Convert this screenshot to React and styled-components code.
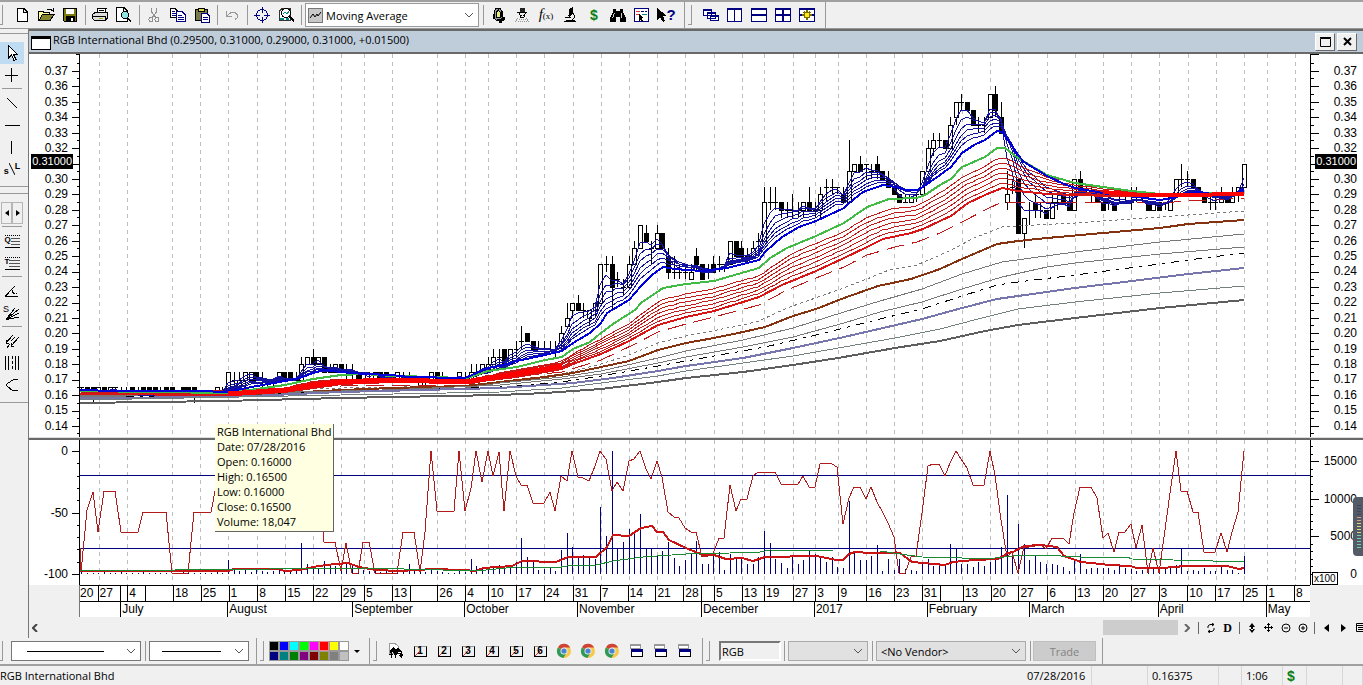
import React from 'react'
import styled, { createGlobalStyle } from 'styled-components'

const uiFont = '"Open Sans", "Noto Sans", sans-serif'
const axisFont = '"Liberation Sans", Arial, sans-serif'

/* ---------- data ---------- */

// open high low close, in half cents, one entry per trading day
const candles = `33 33 32 33,33 33 32 32,33 33 31 32,32 33 32 33,33 33 32 32,32 33 32 33,33 33 32 33,32 33 32 32,32 33 32 32,33 33 32 32,
32 33 32 32,33 33 32 32,33 33 32 32,33 33 32 32,32 33 32 32,33 33 32 32,33 33 32 32,32 32 32 32,33 33 32 32,33 33 32 32,33 33 31 32,
32 32 32 32,32 32 32 32,32 32 32 32,32 33 32 33,32 33 32 32,32 35 32 35,34 35 33 34,33 35 33 34,34 35 33 35,34 35 34 35,35 35 34 34,
34 35 33 34,34 34 33 34,34 34 33 34,34 35 34 35,35 35 34 34,35 35 34 34,34 35 34 34,34 37 34 36,36 37 36 37,37 38 36 36,36 37 36 37,
37 37 35 35,35 36 35 35,35 36 35 36,36 36 35 35,35 36 34 35,35 36 34 35,35 35 34 34,34 35 34 35,34 35 34 34,34 35 34 35,35 35 34 34,
35 35 34 34,34 34 34 34,34 35 34 35,34 35 34 34,34 35 34 34,34 34 34 34,33 34 33 34,34 34 33 34,34 35 34 35,35 35 34 34,34 35 34 34,
34 34 34 34,34 34 34 34,34 35 34 35,34 35 34 34,34 36 34 35,35 36 34 35,35 36 35 36,35 37 35 36,36 38 36 37,37 38 36 37,38 38 36 36,
36 38 36 38,38 39 37 38,39 41 38 39,40 40 39 39,39 39 38 38,38 39 38 38,38 39 38 38,38 39 38 38,38 39 37 38,39 41 38 40,41 44 41 42,
43 44 42 44,44 45 43 43,43 44 42 43,42 43 41 43,43 44 42 44,44 49 44 49,49 50 48 49,49 50 43 46,47 48 46 47,46 47 45 46,46 50 46 49,
49 52 49 51,51 54 51 54,53 54 52 52,51 52 49 51,51 54 51 53,53 53 51 51,50 51 47 48,48 50 47 48,48 49 47 48,48 49 47 48,47 49 47 48,
50 51 48 49,49 49 47 47,48 49 47 48,49 50 48 48,49 50 48 49,49 49 48 49,49 52 49 52,52 52 50 50,51 52 50 50,50 51 49 50,50 52 50 51,
52 53 50 52,52 59 52 57,57 59 56 57,57 59 56 57,57 57 55 56,56 57 55 56,56 58 55 56,56 57 55 56,56 57 55 57,57 59 56 56,56 57 55 56,
56 59 55 58,59 60 57 59,59 60 58 59,59 59 58 59,58 59 57 57,57 65 57 61,61 62 61 62,62 63 61 61,62 62 60 62,61 62 60 61,62 63 60 61,
61 61 60 60,60 61 59 59,59 59 58 58,58 58 57 57,57 58 57 57,57 58 57 58,58 58 57 58,58 61 58 61,61 65 61 64,64 66 63 65,65 66 64 65,
65 65 64 64,64 68 64 67,68 70 67 70,70 71 69 70,70 70 69 69,69 69 67 67,67 68 66 67,67 68 66 67,68 71 68 71,71 72 68 69,68 70 66 66,
57 61 56 58,59 60 58 59,60 60 53 53,53 55 51 55,56 57 54 56,57 58 55 56,56 57 55 56,56 56 55 55,55 58 55 57,57 58 56 57,58 58 57 57,
57 58 56 56,56 60 56 60,60 61 59 59,58 59 58 58,58 59 57 58,58 58 57 57,57 57 56 56,57 58 56 57,57 57 56 56,57 58 57 57,57 58 57 57,
57 59 56 57,58 59 57 58,57 58 57 57,57 57 56 56,56 57 56 57,57 57 56 56,57 57 56 57,56 58 56 58,58 60 58 60,60 62 59 60,60 61 59 60,
60 60 59 59,59 59 58 58,58 58 57 57,57 58 56 57,57 58 56 57,57 59 57 58,58 58 57 57,57 59 57 58,58 59 57 59,59 62 59 62`
  .split(',').map((day) => day.trim().split(' ').map(Number))

const willR = [121, 59, 41, 81, 40, 40, 40, 81, 81, 81, 81, 61, 61, 61, 61, 61, 122, 122, 122, 122, 61, 61, 61, 61, 30, 0, 0, 20, 20, 20, 20, 40, 40, 40, 40, 0, 40, 40, 40, 0, 0, 30, 30, 91, 91, 91, 120, 92, 122, 122, 91, 91, 122, 122, 122, 122, 122, 81, 81, 81, 121, 81, 0, 60, 60, 60, 60, 0, 60, 37, 0, 31, 0, 25, 1, 60, 0, 25, 34, 34, 52, 52, 52, 41, 60, 25, 30, 0, 26, 27, 30, 15, 0, 8, 40, 31, 40, 10, 8, 0, 18, 28, 10, 26, 61, 66, 67, 77, 81, 81, 106, 105, 103, 87, 87, 34, 60, 48, 48, 25, 21, 21, 21, 21, 33, 33, 33, 33, 25, 36, 36, 13, 12, 13, 16, 73, 47, 36, 36, 48, 36, 51, 60, 72, 86, 122, 122, 106, 105, 62, 15, 13, 13, 25, 12, 0, 8, 17, 34, 34, 34, 0, 24, 69, 106, 101, 122, 96, 96, 95, 93, 98, 87, 87, 87, 93, 62, 36, 36, 36, 47, 87, 82, 101, 81, 81, 73, 97, 74, 122, 97, 122, 79, 42, 0, 40, 40, 61, 61, 101, 101, 101, 82, 101, 81, 61, 0]

const volume = [2, 1, 1, 1, 2, 1, 1, 2, 1, 1, 1, 2, 1, 1, 1, 1, 1, 1, 3, 1, 1, 1, 1, 1, 2, 1, 14, 4, 3, 4, 2, 5, 3, 2, 3, 5, 4, 2, 3, 31, 10, 5, 6, 13, 8, 8, 6, 12, 8, 5, 4, 3, 5, 2, 3, 2, 4, 4, 10, 3, 2, 2, 5, 3, 2, 1, 1, 3, 2, 15, 8, 6, 7, 8, 9, 8, 9, 12, 36, 17, 12, 4, 5, 6, 3, 24, 41, 27, 17, 19, 18, 15, 67, 38, 123, 25, 32, 45, 43, 60, 25, 25, 18, 23, 32, 16, 8, 14, 20, 33, 10, 10, 20, 22, 4, 20, 15, 16, 10, 10, 17, 43, 31, 15, 11, 6, 18, 10, 14, 24, 20, 18, 12, 17, 7, 6, 73, 22, 14, 14, 18, 29, 3, 15, 4, 15, 5, 4, 3, 10, 15, 8, 10, 8, 30, 26, 10, 10, 7, 12, 8, 12, 14, 27, 79, 22, 50, 30, 14, 18, 12, 10, 10, 9, 7, 3, 13, 20, 5, 6, 6, 6, 6, 4, 10, 6, 5, 3, 4, 3, 5, 3, 5, 8, 9, 25, 3, 4, 3, 6, 3, 3, 7, 4, 4, 1, 18]

const barX = (i) => Math.round(81.3 + i * 5.642)
const priceY = (u) => Math.round(71 + (74 - u) * 7.717)

const toPoints = (str) => str.trim().split(/\s+/).map((p) => p.split(',').map(Number))
const draw = (pts) => pts.map((p) => p.join(',')).join(' ')

const blue = '80,390 116,391 200,391 226,392 257,386 285,381 300,378 313,373 324,370 341,372 364,374 392,375 409,377 465,378 488,368 500,366 517,361 545,355 562,351 573,343 590,333 601,323 607,313 629,300 641,286 652,275 663,267 675,269 686,270 703,271 727,268 743,264 759,260 765,252 782,237 799,227 816,221 844,208 849,203 863,192 883,185 895,187 906,190 917,190 923,187 940,175 951,167 962,153 974,145 985,140 997,131 1002,132 1010,143 1018,155 1024,162 1047,176 1064,184 1075,188 1092,191 1113,195 1137,197 1160,200 1172,198 1188,193 1200,192 1217,195 1233,195 1244,189'
const green = '80,391 228,393 257,389 285,385 313,379 341,375 364,374 392,376 442,377 465,379 488,371 517,367 545,360 562,357 573,349 590,342 601,333 613,324 635,310 641,303 663,288 686,284 714,281 731,276 759,268 770,258 787,248 816,236 844,223 867,207 889,199 917,198 925,195 940,185 951,179 962,167 985,157 997,148 1005,148 1018,158 1047,175 1075,183 1103,187 1132,191 1159,194 1244,193'
const redTop = toPoints('80,392 228,393 285,388 313,381 341,379 392,378 465,380 516,370 545,365 562,361 573,354 601,339 629,324 647,310 663,299 686,294 714,289 743,280 759,276 782,260 793,253 844,232 867,217 895,208 917,206 945,190 962,177 985,167 997,158 1008,159 1024,168 1047,177 1075,183 1132,192 1159,194 1244,193')
const redLow = toPoints('80,394 228,395 285,392 313,388 341,384 392,382 465,383 516,377 545,372 562,369 573,364 601,354 629,341 658,325 686,317 714,311 743,302 759,297 782,285 816,271 844,258 867,247 883,239 911,233 923,229 940,221 951,216 968,203 985,195 1002,188 1018,191 1047,194 1110,196 1244,195')

const longLines = [
  { color: '#c01818', dash: '18 8', pts: '80,395 341,386 465,385 500,378 562,372 601,360 635,344 658,332 686,324 714,317 759,305 787,290 816,278 844,267 867,255 895,247 917,242 940,233 962,222 985,210 1002,202 1047,203 1132,202 1160,203 1188,201 1244,198' },
  { color: '#777', dash: '3 3', pts: '80,395 341,388 465,386 562,374 601,364 629,355 658,343 686,336 743,325 759,321 787,308 838,290 867,279 889,270 917,265 940,255 951,250 974,238 1002,227 1018,226 1075,223 1160,217 1244,211' },
  { color: '#853210', width: 2, pts: '80,395 228,396 341,390 392,388 465,386 500,382 545,377 573,373 601,367 629,361 658,350 686,343 714,338 743,332 765,327 793,316 816,309 844,298 878,286 911,279 940,269 962,259 997,244 1018,241 1047,238 1103,233 1160,228 1188,224 1244,220' },
  { color: '#777', pts: '80,396 341,391 465,388 500,383 562,377 601,371 658,358 686,351 743,340 793,328 844,312 880,301 922,289 962,274 1002,262 1075,252 1160,242 1244,234' },
  { color: '#777', pts: '80,397 341,392 500,385 562,379 601,374 658,363 686,357 743,347 793,337 844,323 880,312 922,302 962,289 1002,277 1047,267 1075,263 1160,254 1244,247' },
  { color: '#000', dash: '8 6 3 6', pts: '80,398 341,392 500,387 562,382 601,376 658,366 714,356 765,347 816,335 844,328 880,319 922,309 962,296 997,285 1018,282 1075,275 1160,264 1188,260 1244,253' },
  { color: '#7676ac', width: 2, pts: '80,398 228,397 341,392 500,388 573,383 613,378 658,371 686,366 743,358 793,348 844,337 883,328 922,319 962,308 997,299 1018,296 1075,288 1132,281 1188,274 1244,268' },
  { color: '#72807f', pts: '80,400 341,395 500,392 562,388 601,383 658,376 686,371 743,363 793,356 844,347 895,338 940,329 978,319 1018,309 1075,302 1160,293 1244,286' },
  { color: '#5e5e5e', width: 2, pts: '80,403 223,401 341,398 500,395 545,393 601,389 658,382 686,378 743,372 793,365 838,358 895,348 940,341 985,331 1018,325 1075,318 1160,308 1244,300' },
]

const volRed = '80,571 228,571 234,569 279,569 284,571 300,570 313,567 326,565 348,563 359,567 376,570 400,571 433,569 463,570 476,571 483,568 512,566 522,561 556,562 568,557 596,557 607,547 613,535 629,536 641,528 652,526 657,532 663,532 669,540 686,548 703,555 714,555 726,559 742,558 753,561 765,557 816,556 837,560 843,560 849,554 855,552 870,553 900,553 912,562 923,563 945,565 953,562 974,560 998,559 1008,553 1013,552 1024,546 1041,545 1057,547 1064,556 1081,562 1110,565 1130,566 1137,568 1159,568 1177,567 1182,566 1227,566 1239,569 1244,568'
const volGreen = '80,571 364,568 443,570 476,571 516,567 556,568 567,566 596,565 613,561 643,557 686,554 730,553 760,552 770,550 833,551 880,551 900,554 922,557 962,558 995,558 1013,556 1041,555 1080,557 1127,557 1132,559 1173,560 1213,561 1239,562 1244,561'

// day row and month row of the date axis: [label, width share]
const dayCells = [['20', 19], ['27', 22], ['', 6], ['4', 17], ['', 28], ['18', 28], ['25', 28], ['1', 29], ['8', 28], ['15', 28], ['22', 28], ['29', 23], ['5', 28], ['13', 17], ['', 28], ['26', 28], ['4', 23], ['10', 28], ['17', 28], ['24', 29], ['31', 27], ['7', 28], ['14', 28], ['21', 28], ['28', 17], ['', 12], ['5', 28], ['13', 22], ['19', 29], ['27', 22], ['3', 23], ['9', 28], ['16', 28], ['23', 28], ['31', 17], ['', 23], ['13', 28], ['20', 28], ['27', 29], ['6', 28], ['13', 28], ['20', 28], ['27', 28], ['3', 29], ['10', 28], ['17', 28], ['25', 23], ['1', 28], ['8', 15]]
const monthCells = [['', 41], ['July', 107], ['August', 125], ['September', 112], ['October', 113], ['November', 124], ['December', 113], ['2017', 113], ['February', 102], ['March', 129], ['April', 108], ['May', 43]]

const gridX = [99, 127, 172, 200, 228, 257, 285, 313, 341, 364, 392, 437, 465, 488, 516, 544, 573, 601, 629, 657, 685, 714, 742, 764, 793, 815, 838, 866, 894, 922, 962, 990, 1018, 1047, 1075, 1103, 1131, 1159, 1188, 1216, 1244, 1267, 1295]
const prices = Array.from({ length: 24 }, (_, i) => (0.37 - i * 0.01).toFixed(2))

const ema = (n) => {
  let v = 32.6
  return candles.map((c, i) => {
    v += (c[3] - v) * (2 / (n + 1))
    return [barX(i), Math.round(71 + (74 - v) * 7.717)]
  })
}

const yAt = (pts, x) => {
  const i = Math.max(1, pts.findIndex((p) => p[0] >= x))
  const [a, b] = [pts[i - 1], pts[i]]
  return a[1] + ((b[1] - a[1]) * (x - a[0])) / (b[0] - a[0])
}

const redFan = [0, 1, 2, 3, 4, 5].map((k) =>
  candles.map((_, i) => {
    const x = barX(i)
    const t = k / 6
    return [x, Math.round(yAt(redTop, x) * (1 - t) + yAt(redLow, x) * t)]
  })
)

/* ---------- charts ---------- */

const Line = ({ pts, color, width = 1, dash }) => (
  <polyline points={pts} fill="none" stroke={color} strokeWidth={width} strokeDasharray={dash} />
)

const Grid = ({ from, to }) => gridX.map((x) => (
  <path key={x} d={`M${x + 0.5} ${from}V${to}`} stroke="#bdbdbd" strokeDasharray="4 4" />
))

const PriceChart = () => (
  <Plot viewBox="70 54 1250 383" preserveAspectRatio="none" shapeRendering="crispEdges">
    <Grid from={54} to={437} />
    {candles.map(([o, h, l, c], i) => {
      const x = barX(i)
      const top = priceY(Math.max(o, c))
      const height = Math.abs(priceY(o) - priceY(c))
      return (
        <g key={i} stroke="#000">
          <path d={`M${x + 0.5} ${priceY(h)}V${priceY(l)}`} />
          {o === c
            ? <path d={`M${x - 2} ${top + 0.5}H${x + 3}`} />
            : <rect x={x - 1.5} y={top + 0.5} width="4" height={height} fill={c > o ? '#fff' : '#000'} />}
        </g>
      )
    })}
    {longLines.map((l) => <Line key={l.pts} {...l} />)}
    {[3, 5, 7, 9, 11, 13].map((n) => <Line key={n} pts={draw(ema(n))} color="#1414a0" />)}
    {redFan.map((pts, i) => <Line key={i} pts={draw(pts)} color="#c41a1a" />)}
    <Line pts={green} color="#40bc44" width={2} />
    <Line pts={blue} color="#0000d8" width={2} />
    <Line pts={draw(redLow)} color="#d81414" width={2} />
    <Line pts="228,394 285,390 313,385 341,382 392,380 465,382 516,374 545,369 562,366" color="#f00" width={5} />
    <Line pts="1103,192 1140,195 1180,195 1244,194" color="#f00" width={4} />
    <path d="M79.5 54V437M1310.5 54V437M76 54.5H80M1310 54.5H1319" stroke="#000" />
    {prices.map((p, i) => {
      const y = Math.round(71 + i * 15.435) + 0.5
      return <path key={p} d={`M72 ${y}H80M1310 ${y}H1319M77 ${y - 8}H80M1310 ${y - 8}H1314`} stroke="#000" />
    })}
    <path d="M77 433.5H80M1310 433.5H1314" stroke="#000" />
  </Plot>
)

const IndicatorChart = () => (
  <Plot viewBox="70 440 1250 145" preserveAspectRatio="none" shapeRendering="crispEdges">
    <Grid from={440} to={585} />
    {volume.map((v, i) => <path key={i} d={`M${barX(i) + 0.5} 574V${574 - v}`} stroke="#000080" />)}
    <path d="M80 475.5H1310M80 548.5H1310" stroke="#000080" />
    <Line pts={`80,548 ${draw(willR.map((v, i) => [barX(i), 451 + v]))}`} color="#b01c1c" />
    <Line pts={volRed} color="#c81414" width={2} />
    <Line pts={volGreen} color="#1c8a34" />
    <path d="M79.5 440V585M1310.5 440V585" stroke="#000" />
    {Array.from({ length: 11 }, (_, i) => {
      const y = Math.round(451 + i * 12.3) + 0.5
      return <path key={i} d={`M${i % 5 ? 77 : 72} ${y}H80`} stroke="#000" />
    })}
    {Array.from({ length: 18 }, (_, i) => {
      const y = Math.round(574 - i * 7.53) + 0.5
      return <path key={i} d={`M1310 ${y}H${i % 5 ? 1313 : 1319}`} stroke="#000" />
    })}
  </Plot>
)

/* ---------- icons ---------- */

const Icon = ({ children, size = 18 }) => (
  <svg width={size} height={size} viewBox="0 0 18 18" fill="none" stroke="#000" shapeRendering="crispEdges" aria-hidden="true">
    {children}
  </svg>
)

const icons = {
  new: <path d="M4.500 2.500H11L14.500 6V15.500H4.500ZM10.500 3V6.500H14" fill="#fff" />,
  open: <><path d="M1.500 14.500V5.500H6L7 6.500H12.500V8.500" fill="#ffff9c" /><path d="M2 14.500L5.500 8.500H17L13 14.500Z" fill="#84842c" /><path d="M10 3.500H14L16.500 5.500M16.500 2V6" /></>,
  save: <><path d="M2.500 2.500H15.500V15.500H3.500L2.500 14.500Z" fill="#7b7b10" /><path d="M5 3H13V8H5Z" fill="#fff" stroke="none" /><path d="M5 10H14V16H5Z" fill="#000" stroke="none" /><path d="M11 12V15" stroke="#fff" strokeWidth="2" /></>,
  print: <><path d="M5.500 7.500L7 2.500H15L13.500 7.500" fill="#fff" /><path d="M1.500 8.500L4 6.500H16.500V12L14.500 14.500H3.500L1.500 12.500Z" fill="#ddd" /><path d="M8 4.500H13M7 6.500H12M2 10.500H14V14" /><path d="M8 12.500H12" stroke="#a8a800" /></>,
  preview: <><path d="M1.500 1.500H9L12.500 5V15.500H1.500ZM8.500 2V5.500H12" fill="#fff" /><circle cx="10" cy="9" r="3.500" fill="#8fe3e0" /><path d="M12.500 12L16 15.500" strokeWidth="2" /></>,
  cut: <g stroke="#909090"><path d="M6.500 2V6L11 12M11.500 2V6L7 12" /><circle cx="6" cy="13.500" r="2" /><circle cx="12" cy="13.500" r="2" /></g>,
  copy: <g stroke="#000080"><path d="M1.500 2.500H6L8.500 5V11.500H1.500Z" fill="#fff" stroke="#000" /><path d="M3 5.500H6M3 7.500H7M3 9.500H7" /><path d="M7.500 5.500H13L16.500 9V15.500H7.500Z" fill="#fff" /><path d="M9 9.500H13M9 11.500H15M9 13.500H15" /></g>,
  paste: <><path d="M2.500 3.500H14.500V14.500H2.500Z" fill="#7b7b4a" /><path d="M5.500 2.500H11.500V5.500H5.500Z" fill="#d8d84a" /><path d="M8.500 7.500H14L16.500 10V16.500H8.500Z" fill="#fff" stroke="#000080" /><path d="M10 11.500H15M10 13.500H15" stroke="#000080" /></>,
  undo: <path d="M3.500 5V10.500H9M4 10L8 6.500H12L14.500 9V11.500L12 13.500" stroke="#999" />,
  target: <g stroke="#000080"><circle cx="9" cy="9" r="5.500" /><path d="M9.500 1V7M9.500 11V17M1 9.500H7M11 9.500H17" /></g>,
  magnify: <><path d="M2.500 14V5L5 2.500H13V14Z" fill="#fff" stroke="#333" /><path d="M3 12.500H7M9 12.500H12" stroke="#088" strokeWidth="2" /><circle cx="9" cy="7" r="4.500" fill="#fff" strokeWidth="1" /><path d="M6 8L8 6L10 8L12 5" stroke="#079080" /><path d="M12 10L17 15.500" strokeWidth="2" /></>,
  expert: <><path d="M5.500 5L7 2.500H11L13 5V12L11 14H7L4.500 12Z" fill="#999" /><path d="M7.500 6V11H11.500V7L9.500 4Z" fill="#e7ed7c" /><path d="M5 6V12M12 5V11" /><path d="M8 13.500H15M10 15.500H13M13 11L16 13" strokeWidth="2" /></>,
  explorer: <><path d="M4 6.500H14" /><path d="M7 2H12V6H7Z" fill="#222" stroke="none" /><path d="M6.500 7L7.500 11H11L12.500 7" fill="#eee" /><path d="M8 9.500H9M10 9.500H11" /><path d="M2 16L5 12M16 16L13 12M5 15.500H14M6 13.500H13" stroke="#999" strokeDasharray="1 1" /></>,
  microscope: <><path d="M9 3L11 2V8L8 11Z" fill="#000" /><path d="M7 9L10 12M12 7L14 11L11 14M4 11.500H10M3 15.500H15M5 14.500H14" /></>,
  binoculars: <><path d="M4 3H7V5H11V3H14V6L17 12V16H11V11H7V16H1V12L4 6Z" fill="#000" stroke="none" /><path d="M5.500 7L3.500 12M12.500 7V12" stroke="#ccc" /></>,
  report: <><rect x="1.500" y="2.500" width="14" height="13" fill="#fff" stroke="#000080" /><path d="M3 5.500H7M3 8.500H6" stroke="#d33" /><path d="M8 5.500H14" stroke="#000080" strokeDasharray="3 1" /><path d="M9 8.500H14" stroke="#0a8a7a" /><path d="M6 8V15L8 13L9 16L10 15L9 12H11Z" fill="#000" stroke="none" /></>,
  pointer: <path d="M1 2V14L4 11L7 16L9 15L7 10H11Z" fill="#000" stroke="none" />,
  cascade: <g stroke="#000080" fill="#fff"><path d="M1.500 3.500H9.500V9.500H1.500ZM5.500 6.500H13.500V12.500H5.500ZM8.500 9.500H16.500V14.500H8.500Z" /><path d="M1 4H10M5 7H14M8 10H17" strokeWidth="2" /></g>,
  cols: <g stroke="#000080"><path d="M1.500 2.500H15.500V15.500H1.500ZM8.500 3V15" fill="#fff" /><path d="M1 3H16" strokeWidth="2" /></g>,
  rows: <g stroke="#000080"><path d="M1.500 2.500H16.500V15.500H1.500Z" fill="#fff" /><path d="M1 3H17M1 9H17" strokeWidth="2" /></g>,
  tiles: <g stroke="#000080"><path d="M1.500 2.500H16.500V15.500H1.500Z" fill="#fff" /><path d="M1 3H17M1 9H17M9 3V15" strokeWidth="2" /></g>,
  gear: <><path d="M1.500 2.500H16.500V15.500H1.500Z" fill="#fff" stroke="#000080" /><path d="M1 3H17M1 9H17" stroke="#000080" strokeWidth="2" /><path d="M9 4V14M4 9H14M6 6L12 12M12 6L6 12" stroke="#7b6c00" strokeWidth="2" /><circle cx="9" cy="9" r="3" fill="#ffe61c" stroke="#7b6c00" /></>,
  arrow: <path d="M5.500 1.500V14L8.500 11L11 16.500L13 15.500L10.500 10.500H14.500Z" fill="#fff" />,
  plus: <path d="M8.500 2V16M2 9.500H15" />,
  diagonal: <path d="M4 4L14 14" />,
  horizontal: <path d="M2 9.500H17" />,
  vertical: <path d="M8.500 3V16" />,
  angle: <path d="M2 14.500L12 4M2 14.500H15M9.500 8V10L11.500 12M13 11.500H14" />,
  fan: <><path d="M3 15.500L12 4M3 15.500L16 5M3 15.500L16 9M3 15.500L16 13" /><text x="0" y="8" fontSize="9" fontFamily="Liberation Sans" fill="#000" stroke="none">S</text></>,
  slashes: <path d="M3 11L10 3M8 14L16 5M4 16L7 12M8 9L12 5M3.500 8V11.500H6M8.500 11V14.500H11" />,
  bars: <><path d="M2.500 2V16M5.500 2V16M12.500 2V16M15.500 2V16" /><path d="M9.500 2V16" strokeDasharray="3 2" /></>,
  curve: <path d="M15 3L10 4L5 7L3 9L5 11L9 14L15 15" />,
  horse: <><path d="M2.500 1.500H8L11 4V11H2.500Z" fill="#fff" stroke="#999" /><path d="M3 8L6 5L9 7L11 6L15 9L16 14L13 15L11 12L8 14L6 10L3 11Z" fill="#000" stroke="none" /><path d="M4.500 10V16M8.500 12V16M14 12V16M2 12.500H6" /><path d="M11 10.500H14M11 12.500H13" stroke="#fff" /></>,
  window: <><path d="M3.500 2.500H13.500V6H3.500Z" fill="#fff" stroke="#999" /><path d="M3 3H14" stroke="#999" strokeWidth="2" /><path d="M4.500 7.500H15.500V14.500H4.500Z" fill="#fff" /><path d="M4 8.500H16" stroke="#000080" strokeWidth="3" /></>,
}

const Chrome = () => (
  <svg width="16" height="16" viewBox="0 0 16 16" aria-hidden="true">
    <circle cx="8" cy="8" r="7" fill="#f7c948" />
    <path d="M8 8L2 4.200A7 7 0 0 1 14.200 4.600H8Z" fill="#cf4236" />
    <path d="M8 8L1.900 4.400A7 7 0 0 0 7.400 15L10.400 10Z" fill="#2f9a58" />
    <circle cx="8" cy="8" r="3.500" fill="#eee" />
    <circle cx="8" cy="8" r="2.600" fill="#4a83d6" />
  </svg>
)

const Chevron = () => (
  <svg width="10" height="6" viewBox="0 0 10 6" fill="none" stroke="#555" aria-hidden="true">
    <path d="M1 1L5 5L9 1" />
  </svg>
)

/* ---------- page ---------- */

const IconButton = ({ name, label, children }) => (
  <ToolButton type="button" aria-label={label || name}>
    {children || <Icon>{icons[name]}</Icon>}
  </ToolButton>
)

const TopToolbar = () => (
  <Toolbar>
    <ToolGroup>
      {['new', 'open', 'save'].map((n) => <IconButton key={n} name={n} />)}
      <Sep />
      {['print', 'preview'].map((n) => <IconButton key={n} name={n} />)}
      <Sep />
      {['cut', 'copy', 'paste'].map((n) => <IconButton key={n} name={n} />)}
      <Sep />
      <IconButton name="undo" />
      <Sep />
      {['target', 'magnify'].map((n) => <IconButton key={n} name={n} />)}
      <Sep />
      <SelectBox $width={174} $height={24} $bg="#fff" $border="#999">
        <ComboIcon><svg width="13" height="13" viewBox="0 0 13 13" fill="none" stroke="#000"><path d="M1 9L4 5L6 8L8 5L9 7L12 3" /></svg></ComboIcon>
        <select aria-label="Indicator" defaultValue="ma"><option value="ma">Moving Average</option></select>
        <Chevron />
      </SelectBox>
      <Sep />
      {['expert', 'explorer'].map((n) => <IconButton key={n} name={n} />)}
      <IconButton label="Indicator builder"><Fx>f<small>(x)</small></Fx></IconButton>
      <IconButton name="microscope" />
      <IconButton label="Trade"><Dollar>$</Dollar></IconButton>
      {['binoculars', 'report'].map((n) => <IconButton key={n} name={n} />)}
      <IconButton label="Help"><Icon>{icons.pointer}</Icon><Question>?</Question></IconButton>
    </ToolGroup>
    <ToolGroup $grip>
      {['cascade', 'cols', 'rows', 'tiles', 'gear'].map((n) => <IconButton key={n} name={n} />)}
    </ToolGroup>
  </Toolbar>
)

const SideTool = ({ name }) => (
  <SideButton type="button" aria-label={name} $active={name === 'arrow'}><Icon>{icons[name]}</Icon></SideButton>
)

const Sidebar = () => (
  <Side>
    <SideGroup>
      {['arrow', 'plus'].map((n) => <SideTool key={n} name={n} />)}
      <SideSep />
      {['diagonal', 'horizontal', 'vertical'].map((n) => <SideTool key={n} name={n} />)}
      <SideButton type="button" aria-label="Speed line">
        <Letters><b>s</b><svg width="6" height="14" viewBox="0 0 6 14" stroke="#000" fill="none"><path d="M0 1L6 13" /></svg><b>L</b></Letters>
      </SideButton>
    </SideGroup>
    <SideGroup>
      <Pager>
        <button type="button" aria-label="Previous tools"><svg width="4" height="6" viewBox="0 0 4 6"><path d="M4 0V6L0 3Z" /></svg></button>
        <button type="button" aria-label="Next tools"><svg width="4" height="6" viewBox="0 0 4 6"><path d="M0 0V6L4 3Z" /></svg></button>
      </Pager>
      <SideSep />
      {['Q', 'T'].map((t) => (
        <SideButton type="button" key={t} aria-label={`${t} lines`}>
          <Quad><span>{t}</span></Quad>
        </SideButton>
      ))}
      <SideSep />
      {['angle', 'fan'].map((n) => <SideTool key={n} name={n} />)}
      <SideSep />
      {['slashes', 'bars', 'curve'].map((n) => <SideTool key={n} name={n} />)}
    </SideGroup>
  </Side>
)

const palette = ['#000', '#00f', '#0ff', '#0f0', '#f0f', '#f00', '#ff0', '#fff', '#000080', '#008080', '#008000', '#800080', '#800000', '#808000', '#808080', '#c0c0c0']

const BottomToolbar = () => (
  <LowerBar>
    <ToolGroup>
      <SelectBox $width={130} $bg="#fff" $border="#777" $line><select aria-label="Line style" /><Chevron /></SelectBox>
      <Sep />
      <SelectBox $width={100} $bg="#fff" $border="#777" $line><select aria-label="Line weight" /><Chevron /></SelectBox>
    </ToolGroup>
    <ToolGroup $grip>
      <Palette>
        {palette.map((c) => <Swatch key={c} type="button" aria-label={c} $color={c} $picked={c === '#f00'} />)}
      </Palette>
      <DropArrow type="button" aria-label="More colours"><svg width="6" height="3" viewBox="0 0 6 3"><path d="M0 0H6L3 3Z" /></svg></DropArrow>
    </ToolGroup>
    <ToolGroup $grip>
      <IconButton name="horse" />
      {[1, 2, 3, 4, 5, 6].map((n) => <IconButton key={n} label={`Template ${n}`}><Template>{n}</Template></IconButton>)}
      {[1, 2, 3].map((n) => <IconButton key={n} label={`Web ${n}`}><Chrome /></IconButton>)}
      {[1, 2, 3].map((n) => <IconButton key={n} name="window" label={`Layout ${n}`} />)}
    </ToolGroup>
    <ToolGroup $grip>
      <SymbolBox aria-label="Symbol" defaultValue="RGB" />
      <Sep />
      <SelectBox $width={80} $bg="#e1e1e1" $border="#aaa"><select aria-label="Exchange" /><Chevron /></SelectBox>
      <Sep />
      <SelectBox $width={150} $bg="#e1e1e1" $border="#aaa">
        <select aria-label="Vendor" defaultValue="none"><option value="none">&lt;No Vendor&gt;</option></select>
        <Chevron />
      </SelectBox>
      <Sep />
      <TradeButton type="button" disabled>Trade</TradeButton>
    </ToolGroup>
  </LowerBar>
)

const ScrollRow = () => (
  <Scroll>
    <MiniButton type="button" aria-label="Scroll left"><svg width="6" height="8" viewBox="0 0 6 8" fill="none" stroke="#444" strokeWidth="2"><path d="M5 0L1 4L5 8" /></svg></MiniButton>
    <Thumb />
    <MiniButton type="button" aria-label="Scroll right"><svg width="6" height="8" viewBox="0 0 6 8" fill="none" stroke="#666" strokeWidth="2"><path d="M1 0L5 4L1 8" /></svg></MiniButton>
    <Tick />
    <MiniButton type="button" aria-label="Refresh"><svg width="8" height="10" viewBox="0 0 8 10" fill="none" stroke="#000"><path d="M1 5V3L3 1.500H7M5 0L7 1.500L5 3M7 5V7L5 8.500H1M3 7L1 8.500L3 10" /></svg></MiniButton>
    <MiniButton type="button"><b>D</b></MiniButton>
    <Tick />
    <MiniButton type="button" aria-label="Fit height"><svg width="8" height="10" viewBox="0 0 8 10"><path d="M4 0L7 4H1ZM4 10L7 6H1ZM3 3H5V7H3Z" /></svg></MiniButton>
    <MiniButton type="button" aria-label="Move"><svg width="9" height="9" viewBox="0 0 9 9" fill="none" stroke="#000"><path d="M4.500 0V9M0 4.500H9M3 1.500H6M3 7.500H6M1.500 3V6M7.500 3V6" /></svg></MiniButton>
    <MiniButton type="button" aria-label="Zoom out"><svg width="10" height="10" viewBox="0 0 10 10" fill="none" stroke="#000"><circle cx="5" cy="5" r="4" /><path d="M3 5H7" /></svg></MiniButton>
    <MiniButton type="button" aria-label="Zoom in"><svg width="10" height="10" viewBox="0 0 10 10" fill="none" stroke="#000"><circle cx="5" cy="5" r="4" /><path d="M3 5H7M5 3V7" /></svg></MiniButton>
    <Tick />
    <MiniButton type="button" aria-label="Back"><svg width="5" height="8" viewBox="0 0 5 8"><path d="M5 0V8L0 4Z" /></svg></MiniButton>
    <MiniButton type="button" aria-label="Forward"><svg width="5" height="8" viewBox="0 0 5 8"><path d="M0 0V8L5 4Z" /></svg></MiniButton>
    <MiniButton type="button" aria-label="List"><svg width="9" height="9" viewBox="0 0 9 9" fill="none" stroke="#000"><path d="M.5 .5H8.500V8.500H.5ZM1 2.500H8M2 4.500H7M2 6.500H7" /></svg></MiniButton>
  </Scroll>
)

// the tag stands in for the label of the last price
const PriceScale = ({ right }) => (
  <Scale $top={10} $right={right}>
    {prices.map((p) => <span key={p}>{p === '0.31' ? '\u00a0' : p}</span>)}
    <PriceTag $right={right}>0.31000</PriceTag>
  </Scale>
)

const ledColor = (i) => (i < 4 ? '#3a4560' : i < 6 ? '#e0a078' : i < 10 ? '#d4d880' : '#74d0b0')

const App = () => (
  <Page>
    <GlobalStyle />
    <TopToolbar />
    <Middle>
      <Sidebar />
      <ChartWindow>
        <TitleBar>
          <WindowGlyph />
          <h1>RGB International Bhd (0.29500, 0.31000, 0.29000, 0.31000, +0.01500)</h1>
          <TitleButton type="button" aria-label="Maximise"><svg width="11" height="10" viewBox="0 0 11 10" fill="none" stroke="#000"><path d="M.5 1.500H10.500V9.500H.5ZM0 .5H11" /></svg></TitleButton>
          <TitleButton type="button" aria-label="Close"><svg width="9" height="9" viewBox="0 0 9 9" stroke="#000" strokeWidth="2"><path d="M1 1L8 8M8 1L1 8" /></svg></TitleButton>
        </TitleBar>
        <Panel $grow={383}>
          <PriceScale />
          <PriceChart />
          <PriceScale right />
        </Panel>
        <Divider>
          <Tooltip>
            <p>RGB International Bhd</p>
            <p>Date: 07/28/2016</p>
            <p>Open: 0.16000</p>
            <p>High: 0.16500</p>
            <p>Low: 0.16000</p>
            <p>Close: 0.16500</p>
            <p>Volume: 18,047</p>
          </Tooltip>
        </Divider>
        <Panel $grow={145}>
          <Scale $top={4}><span>0</span><span>-50</span><span>-100</span></Scale>
          <IndicatorChart />
          <Scale $top={14} $right>
            <span>15000</span><span>10000</span><span>5000</span><span>0</span>
            <Multiplier>x100</Multiplier>
            <Meter>{Array.from({ length: 15 }, (_, i) => <Led key={i} $color={ledColor(i)} />)}</Meter>
          </Scale>
        </Panel>
        <DateAxis>
          <DateRow>{dayCells.map(([d, w], i) => <DateCell key={i} $w={w}>{d}</DateCell>)}</DateRow>
          <DateRow>{monthCells.map(([m, w], i) => <DateCell key={i} $w={w}>{m}</DateCell>)}</DateRow>
        </DateAxis>
        <ScrollRow />
      </ChartWindow>
    </Middle>
    <BottomToolbar />
    <StatusBar>
      <Status $grow>RGB International Bhd</Status>
      <Status $w={69}>07/28/2016</Status>
      <Status $w={56} />
      <Status $w={71}>0.16375</Status>
      <Status $w={23} />
      <Status $w={41}>1:06</Status>
      <Status $w={24}><Dollar>$</Dollar></Status>
      <Status $w={36} />
      <Status $w={20} />
    </StatusBar>
  </Page>
)

/* ---------- styles ---------- */

const GlobalStyle = createGlobalStyle`
  * { box-sizing: border-box; }
  body { margin: 0; background: #f0f0f0; color: #000; font: 11px/15px ${uiFont}; }
  button, select, input { font: inherit; color: inherit; margin: 0; padding: 0; border: 0; background: none; }
  h1, p { margin: 0; font-size: 11px; font-weight: 400; white-space: nowrap; }
  svg { display: block; flex-shrink: 0; }
`

const Page = styled.div`
  display: flex;
  flex-direction: column;
  min-height: 100vh;
  overflow: hidden;
`

const Toolbar = styled.header`
  display: flex;
  height: 29px;
  border-top: 2px solid #a0a0a0;
  border-bottom: 1px solid #999;
`

const ToolGroup = styled.div`
  display: flex;
  align-items: center;
  position: relative;
  padding: 0 6px 0 ${(p) => (p.$grip ? 14 : 10)}px;
  border-right: 1px solid #999;

  &::before {
    content: '';
    position: absolute;
    left: ${(p) => (p.$grip ? 3 : -1)}px;
    top: 3px;
    bottom: 3px;
    width: 3px;
    border-right: 1px solid #999;
    border-bottom: 1px solid #999;
  }
`

const ToolButton = styled.button`
  display: flex;
  align-items: center;
  justify-content: center;
  width: 24px;
  height: 24px;
`

const Sep = styled.i`
  width: 1px;
  height: 20px;
  margin: 0 2px 0 3px;
  background: #999;
`

const SelectBox = styled.div`
  display: flex;
  align-items: center;
  position: relative;
  width: ${(p) => p.$width}px;
  height: ${(p) => p.$height || 20}px;
  margin: 0 1px;
  padding: 0 4px;
  border: 1px solid ${(p) => p.$border};
  background: ${(p) => p.$bg};

  select {
    flex: 1;
    min-width: 0;
    height: 100%;
    appearance: none;
  }

  &::after {
    content: '';
    display: ${(p) => (p.$line ? 'block' : 'none')};
    position: absolute;
    left: 12%;
    right: 28%;
    top: 50%;
    border-top: 1px solid #000;
  }
`

const ComboIcon = styled.span`
  margin: 0 3px 0 -2px;
  background: #c8c8c8;
  border: 1px solid #777;
`

const Fx = styled.i`
  font: italic 15px/16px "Liberation Serif", serif;
  small { font-size: 9px; font-style: normal; }
`

const Dollar = styled.b`
  color: #0a7d12;
  font: bold 14px/16px "Liberation Sans", sans-serif;
`

const Question = styled.b`
  margin-left: -8px;
  color: #000080;
  font: bold 15px/16px "Liberation Sans", sans-serif;
`

const Middle = styled.div`
  display: flex;
  flex: 1;
`

const Side = styled.nav`
  width: 28px;
  padding-top: 4px;
`

const SideGroup = styled.div`
  padding: 8px 4px 6px 0;
  border-top: 1px solid #999;
  border-bottom: 1px solid #999;
  margin-bottom: 6px;
`

const SideButton = styled.button`
  display: flex;
  align-items: center;
  justify-content: center;
  width: 24px;
  height: 22px;
  background: ${(p) => (p.$active ? '#bfdcf3' : 'none')};
`

const SideSep = styled.i`
  display: block;
  height: 1px;
  margin: 2px 2px 3px;
  background: #999;
`

const Letters = styled.span`
  display: flex;
  b { font: bold 9px/9px ${axisFont}; }
  b:first-child { align-self: flex-end; }
`

const Pager = styled.div`
  display: flex;
  padding-left: 1px;

  button {
    display: flex;
    align-items: center;
    justify-content: center;
    width: 11px;
    height: 22px;
    border: 1px solid #b5b5b5;
  }
`

const Quad = styled.span`
  display: flex;
  width: 15px;
  height: 13px;
  border-top: 1px dotted #000;
  border-bottom: 1px solid #000;
  background: repeating-linear-gradient(#0000 0 2px, #555 2px 3px);

  span { background: #f0f0f0; font: bold 8px/8px ${axisFont}; }
`

const ChartWindow = styled.main`
  display: flex;
  flex-direction: column;
  flex: 1;
  min-width: 0;
  border-left: 1px solid #777;
`

const TitleBar = styled.div`
  display: flex;
  align-items: center;
  height: 25px;
  padding: 0 6px 0 2px;
  border-top: 2px solid #696969;
  border-bottom: 2px solid #696969;
  background: #bfcddb;

  h1 { flex: 1; margin-left: 2px; line-height: 16px; padding-bottom: 4px; }
`

const WindowGlyph = styled.i`
  width: 20px;
  height: 14px;
  margin-top: 3px;
  border: 1px solid #000;
  border-top-width: 3px;
  background: #fff;
`

const TitleButton = styled.button`
  display: flex;
  align-items: center;
  justify-content: center;
  width: 20px;
  height: 18px;
  margin-left: 2px;
  background: #f0f0f0;
  border: 1px solid #fff;
  border-right-color: #696969;
  border-bottom-color: #696969;
`

const Panel = styled.section`
  display: flex;
  flex: ${(p) => p.$grow} 0 0;
  min-height: ${(p) => p.$grow}px;
  background: #fff;
`

const Plot = styled.svg`
  flex: 1;
  min-width: 0;
  width: 0;
  height: auto;
`

const Scale = styled.div`
  display: flex;
  flex-direction: column;
  justify-content: space-between;
  align-items: flex-end;
  position: relative;
  width: ${(p) => (p.$right ? 43 : 41)}px;
  padding: ${(p) => p.$top}px ${(p) => (p.$right ? 6 : 2)}px 4px 0;
  font: 12px/14px ${axisFont};
`

const PriceTag = styled.b`
  position: absolute;
  top: 100px;
  right: ${(p) => (p.$right ? 6 : -3)}px;
  padding: 0 1px;
  background: #000;
  color: #fff;
  font: 11px/15px ${axisFont};
`

const Multiplier = styled.small`
  position: absolute;
  left: -8px;
  bottom: 0;
  padding: 0 1px;
  background: #fff;
  border: 1px solid #000;
  font: 10px/11px ${axisFont};
`

const Meter = styled.div`
  position: absolute;
  right: 0;
  top: 57px;
  display: flex;
  flex-direction: column;
  gap: 2px;
  padding: 8px 2px 8px 4px;
  border-radius: 4px 0 0 4px;
  background: #555b66;
`

const Led = styled.i`
  width: 4px;
  height: 1px;
  background: ${(p) => p.$color};
`

const Divider = styled.div`
  position: relative;
  height: 3px;
  border-top: 1px solid #ddd;
  border-bottom: 2px solid #696969;
`

const Tooltip = styled.aside`
  position: absolute;
  z-index: 1;
  left: 186px;
  top: -14px;
  min-width: 119px;
  padding: 0 2px 2px;
  background: #ffffe1;
  border-right: 1px solid #646464;
  border-bottom: 1px solid #646464;
`

const DateAxis = styled.div`
  margin: 0 53px 0 50px;
  border-left: 1px solid #777;
  background: #fff;
`

const DateRow = styled.div`
  display: flex;
  height: 16px;
  border-top: 1px solid #000;
`

const DateCell = styled.span`
  flex: ${(p) => p.$w} 1 0;
  min-width: 0;
  padding-left: 1px;
  border-left: 1px solid #000;
  font: 12px/15px ${axisFont};
  white-space: nowrap;

  &:first-child { border-left: 0; padding-left: 0; }
`

const Scroll = styled.div`
  display: flex;
  align-items: center;
  height: 21px;
  margin: 0 -6px 0 -3px;
`

const MiniButton = styled.button`
  display: flex;
  align-items: center;
  justify-content: center;
  width: 17px;
  height: 16px;
  b { font: bold 12px/14px "Liberation Serif", serif; }
`

const Thumb = styled.div`
  width: 75px;
  height: 15px;
  margin-left: auto;
  background: #cdcdcd;
`

const Tick = styled.i`
  width: 1px;
  height: 12px;
  margin: 0 3px;
  background: #666;
`

const LowerBar = styled.footer`
  display: flex;
  height: 28px;
  border-bottom: 2px solid #a0a0a0;
`

const Palette = styled.div`
  display: grid;
  grid-template-columns: repeat(8, 10px);
  margin-left: -2px;
`

const Swatch = styled.button`
  height: 10px;
  background: ${(p) => p.$color};
  border: 1px solid ${(p) => (p.$picked ? '#e88' : '#999')};
`

const DropArrow = styled.button`
  width: 14px;
  padding-left: 5px;
`

const Template = styled.span`
  width: 13px;
  height: 11px;
  border: 1px solid #000;
  border-top-color: #999;
  font: bold 10px/7px ${axisFont};
  background: linear-gradient(135deg, #0000 45%, #c33 45% 57%, #0000 57%) 0 100% / 6px 6px no-repeat;
`

const SymbolBox = styled.input`
  width: 62px;
  height: 20px;
  margin-left: 2px;
  padding-left: 1px;
  border: 2px solid #fff;
  border-top-color: #777;
  border-left-color: #777;
`

const TradeButton = styled.button`
  width: 63px;
  height: 20px;
  background: #ccc;
  border: 1px solid #bfbfbf;
  color: #838383;
`

const StatusBar = styled.div`
  display: flex;
  height: 19px;
`

const Status = styled.span`
  flex: ${(p) => (p.$grow ? '1 1 0' : `0 0 ${p.$w}px`)};
  display: flex;
  align-items: center;
  padding-left: ${(p) => (p.$grow ? 0 : 4)}px;
  border-right: ${(p) => (p.$grow ? 0 : 1)}px solid #d7d7d7;
`

export default App
